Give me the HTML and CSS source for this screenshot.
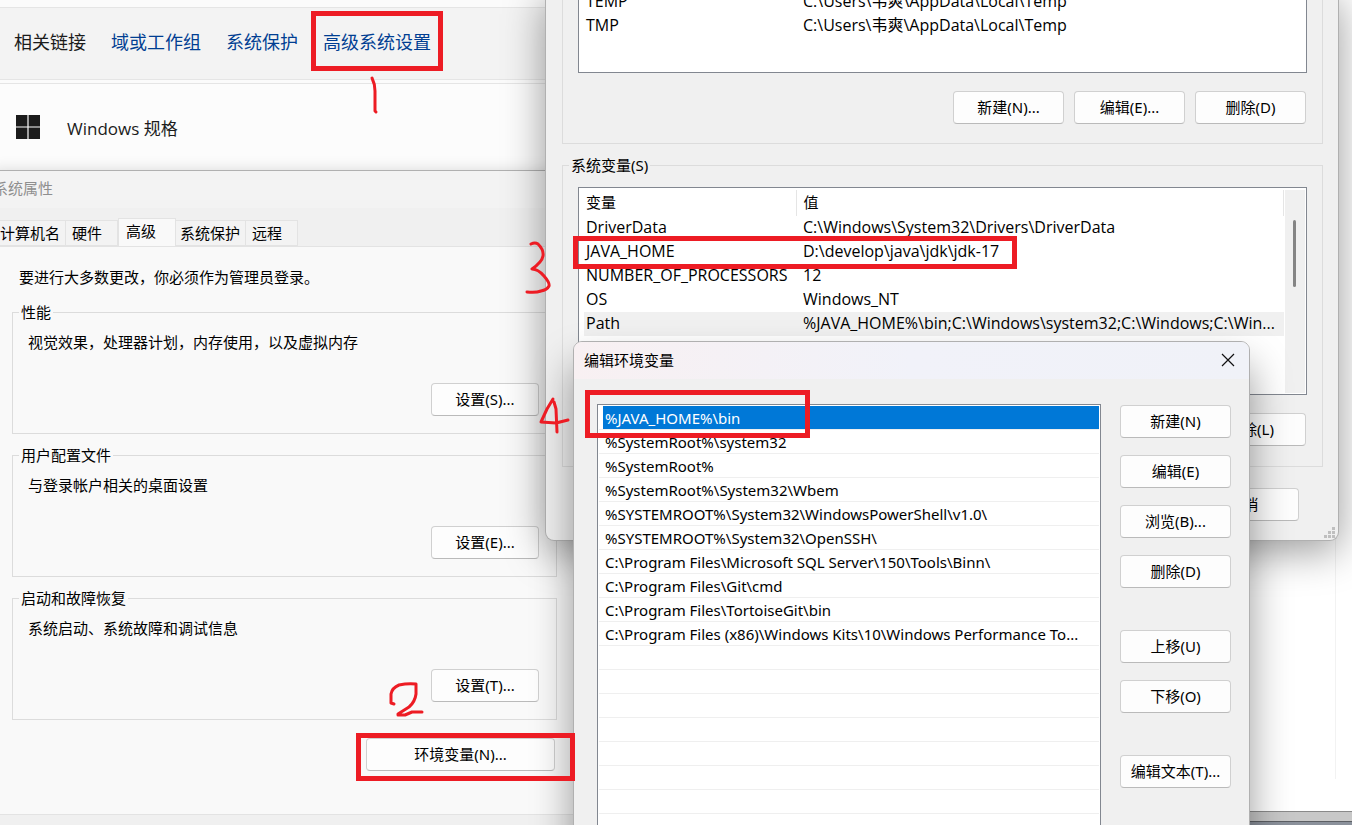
FILE: index.html
```html
<!DOCTYPE html>
<html lang="zh-CN">
<head>
<meta charset="utf-8">
<title>环境变量</title>
<link rel="stylesheet" href="styles.css">
</head>
<body>
<main class="desktop">
  <div class="backdrop"><div class="backdrop-edge"></div></div>
  <section class="settings">
    <nav class="related">
      <span>相关链接</span>
      <a href="#">域或工作组</a>
      <a href="#">系统保护</a>
      <a href="#">高级系统设置</a>
    </nav>
    <div class="spec">
      <svg class="logo" viewBox="0 0 24 24" aria-hidden="true"><path d="M0 0h11.4v11.4H0zM12.6 0H24v11.4H12.6zM0 12.6h11.4V24H0zM12.6 12.6H24V24H12.6z"/></svg>
      <span class="spec-name">Windows 规格</span>
    </div>
  </section>

  <section class="window props">
    <header class="props-title">系统属性</header>
    <div class="tabs" role="tablist">
      <button class="tab tab-first" role="tab">计算机名</button>
      <button class="tab tab-hardware" role="tab">硬件</button>
      <button class="tab tab-active" role="tab" aria-selected="true">高级</button>
      <button class="tab tab-protect" role="tab">系统保护</button>
      <button class="tab tab-remote" role="tab">远程</button>
    </div>
    <div class="panel">
      <p class="notice">要进行大多数更改，你必须作为管理员登录。</p>
      <fieldset class="group"><legend>性能</legend><p>视觉效果，处理器计划，内存使用，以及虚拟内存</p><button class="btn btn-set">设置(S)...</button></fieldset>
      <fieldset class="group"><legend>用户配置文件</legend><p>与登录帐户相关的桌面设置</p><button class="btn btn-set">设置(E)...</button></fieldset>
      <fieldset class="group"><legend>启动和故障恢复</legend><p>系统启动、系统故障和调试信息</p><button class="btn btn-set">设置(T)...</button></fieldset>
      <button class="btn btn-env">环境变量(N)...</button>
    </div>
  </section>

  <section class="window env">
    <div class="user-group">
      <div class="list user-list">
        <table class="vars">
          <colgroup><col class="col-name"><col></colgroup>
          <tbody>
            <tr><td>TEMP</td><td>C:\Users\韦爽\AppData\Local\Temp</td></tr>
            <tr><td>TMP</td><td>C:\Users\韦爽\AppData\Local\Temp</td></tr>
          </tbody>
        </table>
      </div>
      <div class="actions">
        <button class="btn">新建(N)...</button>
        <button class="btn">编辑(E)...</button>
        <button class="btn">删除(D)</button>
      </div>
    </div>
    <fieldset class="system-group">
      <legend>系统变量(S)</legend>
      <div class="list system-list">
        <table class="vars">
          <colgroup><col class="col-name"><col></colgroup>
          <thead><tr><th>变量</th><th>值</th></tr></thead>
          <tbody>
            <tr><td>DriverData</td><td>C:\Windows\System32\Drivers\DriverData</td></tr>
            <tr><td>JAVA_HOME</td><td>D:\develop\java\jdk\jdk-17</td></tr>
            <tr><td>NUMBER_OF_PROCESSORS</td><td>12</td></tr>
            <tr><td>OS</td><td>Windows_NT</td></tr>
            <tr class="current"><td>Path</td><td>%JAVA_HOME%\bin;C:\Windows\system32;C:\Windows;C:\Win...</td></tr>
          </tbody>
        </table>
        <div class="scrollbar"><div class="thumb"></div></div>
      </div>
      <div class="actions"><button class="btn">删除(L)</button></div>
    </fieldset>
    <div class="confirm"><button class="btn">取消</button></div>
    <svg class="grip" viewBox="0 0 11 11" aria-hidden="true"><path d="M8 0h3v3H8zM4 4h3v3H4zM8 4h3v3H8zM0 8h3v3H0zM4 8h3v3H4zM8 8h3v3H8z"/></svg>
  </section>

  <section class="window edit">
    <header class="edit-title">
      <span>编辑环境变量</span>
      <button class="close" aria-label="关闭"><svg viewBox="0 0 12 12"><path d="M0 0L12 12M12 0L0 12"/></svg></button>
    </header>
    <div class="edit-body">
      <ul class="paths">
        <li class="selected">%JAVA_HOME%\bin</li>
        <li>%SystemRoot%\system32</li>
        <li>%SystemRoot%</li>
        <li>%SystemRoot%\System32\Wbem</li>
        <li>%SYSTEMROOT%\System32\WindowsPowerShell\v1.0\</li>
        <li>%SYSTEMROOT%\System32\OpenSSH\</li>
        <li>C:\Program Files\Microsoft SQL Server\150\Tools\Binn\</li>
        <li>C:\Program Files\Git\cmd</li>
        <li>C:\Program Files\TortoiseGit\bin</li>
        <li>C:\Program Files (x86)\Windows Kits\10\Windows Performance To...</li>
        <li></li><li></li><li></li><li></li><li></li><li></li><li></li><li></li>
      </ul>
      <div class="commands">
        <button class="btn">新建(N)</button>
        <button class="btn">编辑(E)</button>
        <button class="btn">浏览(B)...</button>
        <button class="btn">删除(D)</button>
        <button class="btn spaced">上移(U)</button>
        <button class="btn">下移(O)</button>
        <button class="btn spaced">编辑文本(T)...</button>
      </div>
    </div>
  </section>

  <div class="mark mark-link"></div>
  <div class="mark mark-env"></div>
  <div class="mark mark-java"></div>
  <div class="mark mark-path"></div>
  <svg class="ink" width="600" height="740" viewBox="0 0 600 740" aria-hidden="true">
    <path d="M372 78Q375 84 375 91V111L376 112"/>
    <path d="M394 704L391 703V694Q392 688 399 685Q408 683 416 684V694Q415 702 409 707L398 714V715L405 715L412 712L422 712"/>
    <path d="M531 244Q535 242 538 244Q544 250 543 256Q542 262 532 269Q538 269 544 276Q550 283 549 286Q547 290 541 291Q536 293 527 292"/>
    <path d="M553 399L547 409L541 422L556 423L568 420M554 402L556 409L557 432"/>
  </svg>
</main>
</body>
</html>
```

FILE: styles.css
```css
* { box-sizing: border-box; }

body {
  margin: 0;
  font: 15px/20px "Noto Sans", "Noto Sans CJK SC", sans-serif;
  color: #000;
}

p, ul, fieldset, legend { margin: 0; padding: 0; }
button { font: inherit; color: inherit; }

.desktop {
  position: relative;
  height: 100vh;
  overflow: hidden;
  background: #fff;
}

.backdrop {
  height: 100%;
  display: flex;
  flex-direction: column;
  padding-top: 450px;
  border-bottom: 3px solid #8b919b;
}

.backdrop-edge {
  flex: 1;
  margin-right: 16px;
  border-right: 1px solid #f2f2f2;
}

.backdrop::after {
  content: "";
  height: 9px;
  margin-top: 32px;
  border-top: 1px solid #8a8a8a;
  border-bottom: 1px solid #5c5f64;
  background: #c8c8c8;
}

/* Settings page */
.settings {
  position: absolute;
  inset: 0 auto auto 0;
  width: 600px;
  padding-top: 7px;
  background: #fbfbfb;
  font-size: 18px;
  line-height: 24px;
  color: #1b1b1b;
}

.related {
  display: flex;
  align-items: center;
  gap: 25px;
  height: 73px;
  padding: 0 0 4px 14px;
  border: solid #e5e5e5;
  border-width: 1px 0;
  background: #f3f3f3;
}

.related a { color: #003e92; text-decoration: none; }

.spec {
  display: flex;
  align-items: center;
  gap: 27px;
  height: 88px;
  margin-top: 3px;
  padding-left: 16px;
  border-top: 1px solid #e5e5e5;
  background: #fcfcfc;
}

.logo { width: 24px; height: 24px; margin-bottom: 2px; fill: #1b1b1b; }
.spec-name {
  padding-top: 2px;
  font-family: "Open Sans", "Noto Sans CJK SC", sans-serif;
  font-size: 17px;
}

.window {
  position: absolute;
  border: 1px solid #b0b0b0;
  background: #f0f0f0;
}

.btn {
  width: 111px;
  height: 33px;
  padding: 0 0 2px;
  border: 1px solid #d0d0d0;
  border-bottom-color: #bababa;
  border-radius: 4px;
  background: #fdfdfd;
  white-space: nowrap;
}

/* System properties */
.props {
  top: 170px;
  left: -8px;
  width: 620px;
  height: 700px;
  box-shadow: 0 0 14px rgba(0, 0, 0, .14);
}

.props-title {
  height: 37px;
  padding-top: 7px;
  background: #f3f3f3;
  color: #8f8f8f;
}

.tabs {
  display: flex;
  align-items: flex-end;
  height: 38px;
  padding-left: 7px;
}

.tab {
  height: 26px;
  padding: 0 0 0 6px;
  border: solid #e3e3e3;
  border-width: 1px 1px 1px 0;
  background: #f3f3f3;
  text-align: left;
  line-height: 24px;
}

.tab-first { width: 66px; padding-left: 0; }
.tab-hardware { width: 52px; }
.tab-active {
  width: 58px;
  height: 28px;
  padding: 0 0 4px 7px;
  border-width: 1px 1px 0;
  background: #f9f9f9;
}
.tab-protect { width: 70px; padding-left: 4px; }
.tab-remote { width: 52px; }

.panel {
  display: flex;
  flex-direction: column;
  gap: 11px;
  height: 569px;
  padding: 20px 54px 0 19px;
  border: solid #e3e3e3;
  border-width: 1px 0;
  background: #f9f9f9;
}

.notice { padding-left: 7px; margin-bottom: 4px; }

.group {
  display: flex;
  flex-direction: column;
  align-items: flex-end;
  height: 132px;
  padding: 10px 17px 0 15px;
  border: 1px solid #dcdcdc;
}

.group p { align-self: stretch; }
.group .btn { margin-top: 31px; }
.group legend, .system-group legend { margin-left: -9px; padding: 0 2px; line-height: 20px; }
.btn-set { width: 108px; }
.btn-env { align-self: flex-end; width: 189px; margin: 7px 2px 0 0; }

/* Environment variables */
.env {
  top: -10px;
  left: 545px;
  width: 794px;
  height: 551px;
  padding: 0 15px 0 16px;
  border-top: 0;
  border-radius: 0 0 9px 9px;
  box-shadow: 0 10px 42px rgba(0, 0, 0, .4);
}

.user-group {
  height: 154px;
  padding: 0 15px;
  border: 1px solid #dcdcdc;
  border-top: 0;
}

.list { border: 1px solid #828790; background: #fff; }
.user-list { height: 83px; border-top: 0; }

.vars {
  width: 100%;
  border-collapse: collapse;
  table-layout: fixed;
}

.col-name { width: 217px; }
.vars td, .vars th {
  height: 24px;
  padding: 0 0 2px 7px;
  font-weight: 400;
  text-align: left;
  white-space: nowrap;
}

.vars td { font-family: "Open Sans", "Noto Sans CJK SC", sans-serif; font-size: 16px; }
.vars th { height: 26px; border-right: 1px solid #e5e5e5; }

.actions {
  display: flex;
  justify-content: flex-end;
  gap: 10px;
  padding: 18px 1px 0 0;
}

.system-group {
  height: 312px;
  margin-top: 11px;
  padding: 12px 15px 0;
  border: 1px solid #dcdcdc;
}

.system-list {
  display: flex;
  align-items: flex-start;
  height: 208px;
  padding: 2px 1px 1px 0;
}

.system-list .vars { flex: 1; }
.current td { background: #f0f0f0; }
.current td:first-child { background: linear-gradient(90deg, #fff 5px, #f0f0f0 5px); }

.scrollbar {
  width: 20px;
  height: 100%;
  margin-left: 1px;
  padding: 30px 9px 0 8px;
  background: #f0f0f0;
}

.thumb { height: 67px; border-radius: 2px; background: #858585; }

.confirm {
  display: flex;
  justify-content: flex-end;
  padding: 21px 24px 0 0;
}

.grip {
  position: absolute;
  right: 3px;
  bottom: 2px;
  width: 11px;
  height: 11px;
  fill: #bfbfbf;
}

/* Edit dialog */
.edit {
  top: 341px;
  left: 573px;
  width: 677px;
  height: 600px;
  overflow: hidden;
  border-radius: 9px;
  box-shadow: 0 24px 40px rgba(0, 0, 0, .4);
}

.edit-title {
  display: flex;
  align-items: center;
  justify-content: space-between;
  height: 37px;
  padding: 0 14px 2px 10px;
  background: linear-gradient(90deg, #f8f0f2, #f1f2f9 50%, #f0f2f8);
}

.close { width: 14px; height: 14px; padding: 1px; border: 0; background: none; }
.close svg { display: block; width: 12px; height: 12px; stroke: #111; stroke-width: 1.2; overflow: visible; }

.edit-body {
  display: flex;
  align-items: flex-start;
  gap: 19px;
  padding: 25px 18px 0 23px;
}

.paths {
  flex: 1;
  padding: 1px;
  border: 1px solid #828790;
  background: #fff;
  list-style: none;
}

.paths li {
  height: 24px;
  padding-left: 6px;
  border-bottom: 1px solid #efefef;
  line-height: 24px;
  white-space: nowrap;
}

.paths .selected {
  background: linear-gradient(90deg, #fff 4px, #0078d7 4px);
  color: #fff;
}

.commands { display: flex; flex-direction: column; gap: 17px; padding-top: 1px; }
.spaced { margin-top: 25px; }

/* Red annotations */
.mark { position: absolute; border: 5px solid #ed1c24; }
.mark-link { top: 11px; left: 311px; width: 132px; height: 60px; }
.mark-env { top: 733px; left: 356px; width: 219px; height: 48px; }
.mark-java { top: 236px; left: 573px; width: 444px; height: 33px; }
.mark-path { top: 390px; left: 585px; width: 225px; height: 48px; }

.ink {
  position: absolute;
  top: 0;
  left: 0;
  fill: none;
  stroke: #ed1c24;
  stroke-width: 3;
  stroke-linecap: round;
  stroke-linejoin: round;
  pointer-events: none;
}
```
